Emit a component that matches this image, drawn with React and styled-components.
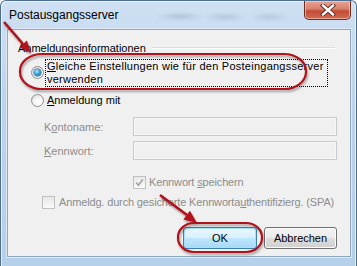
import React from 'react'
import styled, { createGlobalStyle } from 'styled-components'

const GlobalStyle = createGlobalStyle`
  body {
    margin: 0;
    font-family: "Liberation Sans Narrow", "Arial Narrow", sans-serif;
    font-size: 12px;
  }
`

const Window = styled.div`
  position: relative;
  width: 357px;
  height: 266px;
  box-sizing: border-box;
  display: flex;
  flex-direction: column;
  border: 1px solid #4d6d92;
  border-bottom: none;
  border-radius: 6px 6px 0 0;
  background: linear-gradient(180deg, #cfe0f3 0%, #bcd3ec 40%, #b6cfea 100%);
  box-shadow: inset 1px 1px 0 #e9f2fb, inset -1px 0 0 #e9f2fb;
  overflow: hidden;
`

const TitleBar = styled.div`
  height: 28px;
  display: flex;
  align-items: flex-start;
  padding-left: 8px;
`

const Title = styled.div`
  padding-top: 7px;
  line-height: 14px;
  color: #000;
`

// blurred glass showing the window behind
const Glass = styled.div`
  flex: 1;
  height: 9px;
  margin: 11px 12px 0 14px;
  background:
    radial-gradient(ellipse 24px 4px at 30% 50%, rgba(90, 110, 140, 0.28), transparent),
    radial-gradient(ellipse 22px 4px at 58% 55%, rgba(90, 110, 140, 0.25), transparent),
    radial-gradient(ellipse 20px 4px at 86% 55%, rgba(90, 110, 140, 0.22), transparent);
  filter: blur(1.5px);
`

const CloseButton = styled.div`
  width: 45px;
  height: 18px;
  margin-right: 5px;
  display: flex;
  align-items: center;
  justify-content: center;
  border: 1px solid #6b2e27;
  border-top: none;
  border-radius: 0 0 5px 5px;
  background: linear-gradient(180deg, #e6a493 0%, #d77f6b 45%, #c44c37 55%, #d26a50 100%);
  box-shadow: inset 0 0 0 1px rgba(255, 220, 210, 0.55);
`

const Client = styled.div`
  flex: 1;
  min-height: 0;
  margin: 0 5px 9px 6px;
  display: flex;
  flex-direction: column;
  background: #f0f0f0;
  border: 1px solid #8ea7c4;
  box-shadow: 0 0 0 1px #dfe9f6;
  padding: 11px 13px 0 0;
  font-size: 11px;
`

const Header = styled.div`
  display: flex;
  align-items: center;
  height: 14px;
  padding-left: 10px;
  padding-right: 2px;
  line-height: 14px;
`

const Rule = styled.div`
  flex: 1;
  margin-left: 6px;
  border-top: 1px solid #d5dfe5;
  border-bottom: 1px solid #ffffff;
`

const OptionRow = styled.div`
  display: flex;
  align-items: ${p => (p.$top ? 'flex-start' : 'center')};
  margin-top: ${p => p.$mt}px;
  padding-left: ${p => p.$indent}px;
  white-space: nowrap;
`

const Radio = styled.span`
  flex: none;
  position: relative;
  width: 11px;
  height: 11px;
  margin-top: ${p => p.$mt || 0}px;
  border: 1px solid #8e8f8f;
  border-radius: 50%;
  background: radial-gradient(circle at 60% 65%, #ffffff 0%, #f4f4f4 45%, #d4d4d4 100%);

  &::after {
    content: '';
    display: ${p => (p.$checked ? 'block' : 'none')};
    position: absolute;
    left: 2px;
    top: 2px;
    width: 7px;
    height: 7px;
    border-radius: 50%;
    background: radial-gradient(circle at 40% 35%, #b8e6ff 0%, #3aa0de 45%, #175987 100%);
    box-shadow: 0 0 0 0.5px #1f4f73;
  }
`

const OptionText = styled.span`
  margin-left: 1px;
  padding: 0 3px 0 1px;
  border: 1px ${p => (p.$focus ? 'dotted #000' : 'solid transparent')};
  line-height: 13px;
  letter-spacing: ${p => (p.$focus ? '0.25px' : 'normal')};
  color: #000;
`

const Key = styled.span`
  text-decoration: underline;
`

const FieldRow = styled.div`
  display: flex;
  align-items: center;
  margin-top: ${p => p.$mt}px;
  padding-left: 36px;
`

const FieldLabel = styled.span`
  width: 89px;
  color: #8d8d8d;
`

const Input = styled.div`
  width: 205px;
  height: 19px;
  box-sizing: border-box;
  border: 1px solid #c7cbd0;
  background: #f0f0f0;
  box-shadow: inset 0 0 0 1px #f7f7f7;
`

const Check = styled.span`
  flex: none;
  width: 13px;
  height: 13px;
  box-sizing: border-box;
  display: flex;
  align-items: center;
  justify-content: center;
  border: 1px solid #c0c0c0;
  background: linear-gradient(180deg, #e8e8e8, #fafafa);
`

const CheckText = styled.span`
  margin-left: ${p => p.$gap}px;
  color: #8d8d8d;
  line-height: 15px;
  letter-spacing: -0.15px;
`

const ButtonRow = styled.div`
  display: flex;
  justify-content: flex-end;
  gap: 7px;
  margin-top: 17px;
`

const Button = styled.div`
  width: ${p => p.$w}px;
  height: 22px;
  box-sizing: border-box;
  display: flex;
  align-items: center;
  justify-content: center;
  border: 1px solid ${p => (p.$default ? '#3c7fb1' : '#707070')};
  border-radius: 3px;
  color: #000;
  background: ${p =>
    p.$default
      ? 'linear-gradient(180deg, #eaf6fd 0%, #d9f0fc 48%, #bee6fd 52%, #a7d9f5 100%)'
      : 'linear-gradient(180deg, #f2f2f2 0%, #ebebeb 48%, #dddddd 52%, #cfcfcf 100%)'};
  box-shadow: inset 0 0 0 1px ${p => (p.$default ? '#a8e0f8' : '#fcfcfc')};
`

const Marks = styled.svg`
  position: absolute;
  left: -1px;
  top: -1px;
  width: 357px;
  height: 266px;
  pointer-events: none;
  filter: drop-shadow(1px 2px 1px rgba(0, 0, 0, 0.35));
`

const CloseGlyph = () => (
  <svg width="16" height="12" viewBox="0 0 16 12">
    <path d="M3 1.5 L13 10.5 M13 1.5 L3 10.5" stroke="#5b2a24" strokeWidth="4.2" strokeLinecap="square" />
    <path d="M3 1.5 L13 10.5 M13 1.5 L3 10.5" stroke="#ffffff" strokeWidth="2.4" strokeLinecap="square" />
  </svg>
)

const Tick = () => (
  <svg width="9" height="9" viewBox="0 0 9 9">
    <path d="M1.2 4.6 L3.4 7.2 L7.8 1.4" fill="none" stroke="#a3a3a3" strokeWidth="1.6" />
  </svg>
)

export default function App() {
  return (
    <>
      <GlobalStyle />
      <Window>
        <TitleBar>
          <Title>Postausgangsserver</Title>
          <Glass />
          <CloseButton>
            <CloseGlyph />
          </CloseButton>
        </TitleBar>
        <Client>
          <Header>
            Anmeldungsinformationen
            <Rule />
          </Header>
          <OptionRow $top $mt={4} $indent={23}>
            <Radio $checked $mt={7} />
            <OptionText $focus>
              <Key>G</Key>leiche Einstellungen wie für den Posteingangsserver
              <br />
              verwenden
            </OptionText>
          </OptionRow>
          <OptionRow $mt={6} $indent={23}>
            <Radio />
            <OptionText>
              <Key>A</Key>nmeldung mit
            </OptionText>
          </OptionRow>
          <FieldRow $mt={9}>
            <FieldLabel>
              K<Key>o</Key>ntoname:
            </FieldLabel>
            <Input />
          </FieldRow>
          <FieldRow $mt={5}>
            <FieldLabel>
              <Key>K</Key>ennwort:
            </FieldLabel>
            <Input />
          </FieldRow>
          <OptionRow $mt={15} $indent={125}>
            <Check>
              <Tick />
            </Check>
            <CheckText $gap={3}>
              Kennwort <Key>s</Key>peichern
            </CheckText>
          </OptionRow>
          <OptionRow $mt={5} $indent={34}>
            <Check />
            <CheckText $gap={4}>
              Anmeldg. durch gesicherte Kennworta<Key>u</Key>thentifizierg. (SPA)
            </CheckText>
          </OptionRow>
          <ButtonRow>
            <Button $default $w={74}>OK</Button>
            <Button $w={73}>Abbrechen</Button>
          </ButtonRow>
        </Client>
        <Marks viewBox="0 0 357 266">
          <g stroke="#b3121c" fill="none" strokeWidth="2.2">
            <rect x="20" y="54" width="286" height="35" rx="22" ry="17" />
            <rect x="178" y="223" width="84" height="29" rx="16" ry="14" />
            <path d="M4 22 L23 44" strokeWidth="2.6" />
            <path d="M160 195 L187 215" strokeWidth="2.6" />
          </g>
          <g fill="#b3121c">
            <polygon points="31,53 19.3,47.2 26.9,40.6" />
            <polygon points="197,223 183.3,219.6 189.9,210.8" />
          </g>
        </Marks>
      </Window>
    </>
  )
}
